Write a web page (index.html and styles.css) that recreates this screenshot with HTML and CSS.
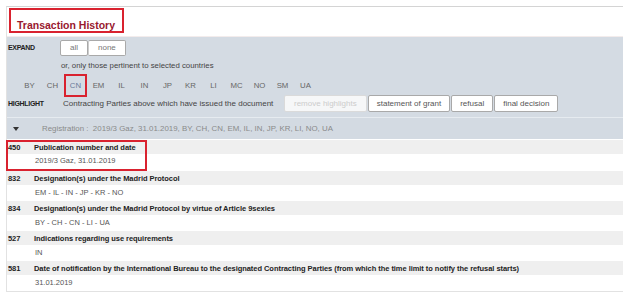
FILE: index.html
```html
<!DOCTYPE html>
<html lang="en">
<head>
<meta charset="UTF-8">
<title>Transaction History</title>
<link rel="stylesheet" href="styles.css">
</head>
<body>
<div class="frame">
    <div class="title-bar">
        <h2 class="title">Transaction History</h2>
    </div>

    <div class="panel">
        <div class="line">
            <span class="label short">EXPAND</span>
            <div class="btn-group joined">
                <button class="btn">all</button>
                <button class="btn">none</button>
            </div>
        </div>
        <div class="line sub">or, only those pertinent to selected countries</div>
        <div class="codes">
            <span>BY</span><span>CH</span><span class="picked">CN</span><span>EM</span><span>IL</span><span>IN</span><span>JP</span><span>KR</span><span>LI</span><span>MC</span><span>NO</span><span>SM</span><span>UA</span>
        </div>
        <div class="line hl">
            <span class="label">HIGHLIGHT</span>
            <span class="note">Contracting Parties above which have issued the document</span>
            <div class="btn-group">
                <button class="btn off">remove highlights</button>
                <button class="btn">statement of grant</button>
                <button class="btn">refusal</button>
                <button class="btn">final decision</button>
            </div>
        </div>
    </div>

    <div class="reg">
        <span class="caret"></span>
        <span>Registration :&nbsp; 2019/3 Gaz, 31.01.2019, BY, CH, CN, EM, IL, IN, JP, KR, LI, NO, UA</span>
    </div>

    <div class="items">
        <div class="item first marked">
            <div class="head"><b class="code">450</b><b>Publication number and date</b></div>
            <div class="value">2019/3 Gaz, 31.01.2019</div>
        </div>
        <div class="item">
            <div class="head"><b class="code">832</b><b>Designation(s) under the Madrid Protocol</b></div>
            <div class="value">EM - IL - IN - JP - KR - NO</div>
        </div>
        <div class="item">
            <div class="head"><b class="code">834</b><b>Designation(s) under the Madrid Protocol by virtue of Article 9sexies</b></div>
            <div class="value">BY - CH - CN - LI - UA</div>
        </div>
        <div class="item">
            <div class="head"><b class="code">527</b><b>Indications regarding use requirements</b></div>
            <div class="value">IN</div>
        </div>
        <div class="item">
            <div class="head"><b class="code">581</b><b>Date of notification by the International Bureau to the designated Contracting Parties (from which the time limit to notify the refusal starts)</b></div>
            <div class="value">31.01.2019</div>
        </div>
    </div>
</div>
</body>
</html>
```

FILE: styles.css
```css
body {
    margin: 0;
    background: #fff;
    font-family: "Liberation Sans", Arial, sans-serif;
    font-size: 7.5px;
    color: #333;
}
.frame {
    margin: 6px 9px 0 6px;
    height: 286px;
    border-top: 1px solid #d4d4d4;
    border-left: 1px solid #e2e2e2;
    border-bottom: 1px solid #e2e2e2;
    box-sizing: border-box;
}
.title-bar {
    height: 30px;
    padding: 1px 0 0 2px;
    box-sizing: border-box;
    border-bottom: 1px solid #f3ecec;
}
.title {
    display: inline-block;
    margin: 0;
    width: 115px;
    height: 25px;
    box-sizing: border-box;
    border: 2px solid #d9222f;
    padding: 9px 0 0 6px;
    font-size: 10.5px;
    font-weight: bold;
    color: #98182e;
    line-height: 12px;
}
.panel {
    background: #d4dbe3;
    padding: 2px 0 5px 1px;
    border-bottom: 1px solid #e6ebf0;
}
.line {
    display: flex;
    align-items: center;
    height: 17px;
}
.label {
    width: 55px;
    font-weight: bold;
    font-size: 7px;
    color: #222;
    letter-spacing: -0.3px;
}
.label.short {
    width: 52px;
}
.sub {
    padding-left: 53px;
    height: 18px;
    font-size: 7.8px;
    color: #444;
}
.note {
    width: 221px;
    font-size: 8px;
    color: #444;
}
.btn-group {
    display: flex;
}
.btn {
    font-family: inherit;
    font-size: 8px;
    color: #555;
    background: #fff;
    border: 1px solid #a9a9a9;
    border-radius: 2px;
    height: 17px;
    padding: 0 8px;
    margin: 0;
    cursor: pointer;
}
.btn + .btn {
    margin-left: 1px;
}
.joined .btn {
    height: 16px;
    padding: 0 9px;
    color: #777;
}
.joined .btn + .btn {
    margin-left: 0;
    border-left-color: #ccc;
}
.btn.off {
    color: #ccc;
    border-color: #dadada;
    background: #f6f7f8;
    padding: 0 9px;
}
.codes {
    display: flex;
    height: 23px;
    align-items: center;
    padding-left: 10px;
    margin-bottom: -2px;
    font-size: 7.8px;
    color: #666;
}
.codes span {
    width: 23px;
    text-align: center;
    line-height: 19px;
    box-sizing: border-box;
}
.codes .picked {
    border: 2px solid #d9222f;
    color: #6a7a99;
}
.reg {
    display: flex;
    align-items: center;
    height: 21px;
    background: #d3dae2;
    font-size: 7.9px;
    color: #8a8a8a;
}
.caret {
    width: 0;
    height: 0;
    margin: 0 23px 0 6px;
    border-left: 3px solid transparent;
    border-right: 3px solid transparent;
    border-top: 4px solid #333;
}
.items {
    padding-top: 1px;
}
.item {
    position: relative;
    height: 30px;
}
.item.first {
    height: 31px;
}
.item.marked::after {
    content: "";
    position: absolute;
    top: 0;
    left: -1px;
    width: 141px;
    height: 31px;
    box-sizing: border-box;
    border: 2px solid #d9222f;
}
.head {
    display: flex;
    align-items: center;
    height: 14px;
    background: #efefef;
    width: 616px;
    color: #222;
    letter-spacing: -0.05px;
}
.code {
    width: 27px;
    padding-left: 1px;
    box-sizing: border-box;
}
.value {
    height: 16px;
    line-height: 15px;
    padding-left: 28px;
    color: #555;
}
.first .value {
    height: 17px;
    line-height: 14px;
}
```
